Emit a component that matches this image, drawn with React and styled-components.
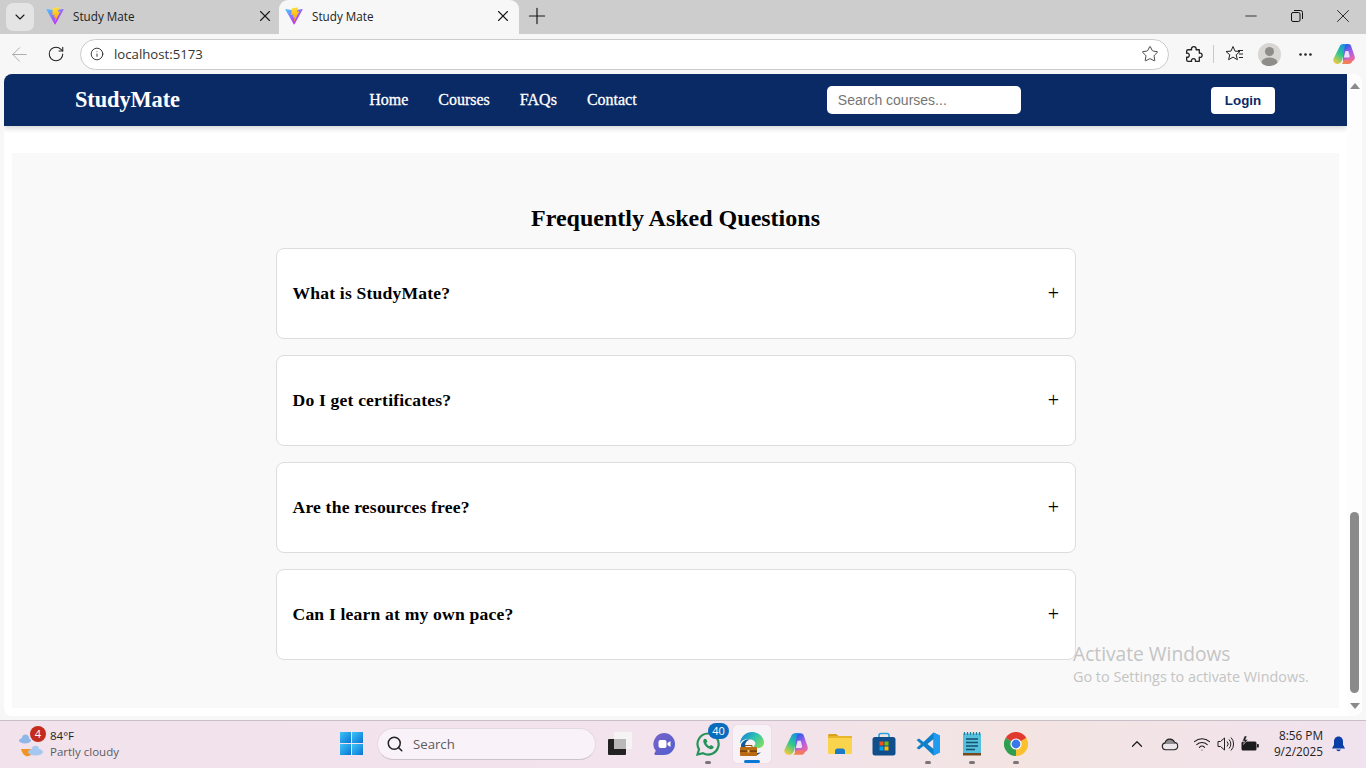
import styled, { createGlobalStyle } from 'styled-components';
import { ArrowLeft, ChevronDown, ChevronUp, Info, Minus, MoreHorizontal, Plus, RotateCw, Search, Star, Wifi, X } from 'lucide-react';

const GlobalStyle = createGlobalStyle`
  html, body {
    margin: 0;
    padding: 0;
    width: 1366px;
    height: 768px;
    overflow: hidden;
    background: #f7f7f7;
  }
  * { box-sizing: border-box; }
`;

const Desktop = styled.div`
  position: relative;
  width: 1366px;
  height: 768px;
  display: flex;
  flex-direction: column;
  font-family: 'Open Sans', 'Noto Sans', sans-serif;
`;

/* browser chrome */
const TabStrip = styled.div`
  height: 34px;
  background: #cdcdcd;
  display: flex;
  align-items: center;
  color: #1a1a1a;
`;
const TabMenu = styled.div`
  width: 28px;
  height: 28px;
  margin-left: 6px;
  margin-right: 2px;
  border-radius: 7px;
  background: #e4e4e4;
  display: flex;
  align-items: center;
  justify-content: center;
`;
const Tab = styled.div`
  width: 240px;
  height: 34px;
  margin-left: ${(p) => (p.$active ? '3px' : '0')};
  padding: 0 ${(p) => (p.$active ? '7px' : '2px')} 2px ${(p) => (p.$active ? '6px' : '10px')};
  display: flex;
  align-items: center;
  border-radius: 9px 9px 0 0;
  background: ${(p) => (p.$active ? '#f7f7f7' : 'transparent')};
`;
const TabTitle = styled.span`
  flex: 1;
  margin-left: 9px;
  font: 11.7px 'Open Sans', sans-serif;
  color: #222;
`;
const NewTab = styled.div`
  margin-left: 5px;
  padding-bottom: 2px;
  display: flex;
`;
const WindowButtons = styled.div`
  margin-left: auto;
  display: flex;
`;
const WindowButton = styled.div`
  width: 46px;
  height: 34px;
  padding-bottom: 2px;
  display: flex;
  align-items: center;
  justify-content: center;
`;

const Toolbar = styled.div`
  height: 40px;
  background: #f7f7f7;
  display: flex;
  align-items: center;
  color: #222;
`;
const ToolSlot = styled.div`
  width: ${(p) => p.$w || 36}px;
  display: flex;
  justify-content: center;
  align-items: center;
  flex: none;
`;
const AddressBar = styled.div`
  width: 1089px;
  height: 31px;
  margin: 0 6px 0 6px;
  border: 1px solid #cbcbcb;
  border-radius: 16px;
  background: #fff;
  display: flex;
  align-items: center;
  padding: 0 9px;
  flex: none;
`;
const Url = styled.span`
  margin-left: 10px;
  flex: 1;
  font: 13.2px 'Open Sans', sans-serif;
  color: #333;
`;
const ToolDivider = styled.div`
  width: 1px;
  height: 18px;
  margin-left: 2px;
  background: #c9c9c9;
`;
const Avatar = styled.div`
  width: 23px;
  height: 23px;
  border-radius: 50%;
  background: #d8d6d3;
  overflow: hidden;
`;

/* page */
const PageFrame = styled.div`
  height: 642px;
  margin: 0 4px;
  background: #fff;
  border-radius: 8px;
  display: flex;
  overflow: hidden;
`;
const Page = styled.div`
  flex: 1;
  display: flex;
  flex-direction: column;
`;
const Navbar = styled.nav`
  height: 52px;
  padding: 0 72px 0 71px;
  background: #0a2a66;
  box-shadow: 0 2px 6px rgba(0, 0, 0, 0.18);
  display: flex;
  align-items: center;
  justify-content: space-between;
`;
const Logo = styled.div`
  width: 105px;
  font: bold 22.4px 'Liberation Serif', serif;
  letter-spacing: -0.1px;
  white-space: nowrap;
  color: #fff;
`;
const NavLinks = styled.div`
  display: flex;
  gap: 30px;
  margin-left: -1px;
`;
const NavLink = styled.a`
  font: 500 16px 'Liberation Serif', serif;
  color: #fff;
  -webkit-text-stroke: 0.3px #fff;
`;
const SearchInput = styled.input`
  width: 194px;
  height: 28px;
  padding: 0 11px;
  border: none;
  border-radius: 5px;
  background: #fff;
  font: 14px 'Liberation Sans', sans-serif;
  &::placeholder { color: #757575; opacity: 1; }
`;
const LoginButton = styled.button`
  width: 64px;
  height: 27px;
  padding: 0;
  margin-top: 1px;
  border: none;
  border-radius: 4px;
  background: #fff;
  color: #0a2a66;
  font: bold 13.33px 'Liberation Sans', sans-serif;
`;
const FaqSection = styled.section`
  margin: 27px 8px 0;
  height: 555px;
  background: #f9f9f9;
  padding-top: 51px;
  display: flex;
  flex-direction: column;
  align-items: center;
`;
const FaqTitle = styled.h2`
  margin: 0 0 16px;
  font: bold 24px/28px 'Liberation Serif', serif;
  color: #000;
`;
const FaqList = styled.div`
  width: 800px;
  display: flex;
  flex-direction: column;
  gap: 16px;
`;
const FaqCard = styled.div`
  height: 91px;
  padding: 0 16px;
  background: #fff;
  border: 1px solid #ddd;
  border-radius: 8px;
  display: flex;
  align-items: center;
  justify-content: space-between;
`;
const Question = styled.h3`
  margin: 0;
  font: bold 17.6px 'Liberation Serif', serif;
  letter-spacing: 0.18px;
  color: #000;
`;
const Toggle = styled.span`
  font: 20px 'Liberation Serif', serif;
  color: #000;
  width: 12px;
  margin-right: -1px;
  text-align: center;
`;
const ScrollTrack = styled.div`
  width: 15px;
  padding: 0 3px;
  background: #fdfdfd;
  display: flex;
  flex-direction: column;
  align-items: center;
`;
const ScrollArrow = styled.div`
  width: 0;
  height: 0;
  margin-top: ${(p) => p.$mt}px;
  border-left: 5px solid transparent;
  border-right: 5px solid transparent;
  ${(p) => (p.$down ? 'border-top: 6px solid #8a8a8a;' : 'border-bottom: 6px solid #8a8a8a;')}
`;
const ScrollThumb = styled.div`
  width: 9px;
  height: 181px;
  margin-top: 423px;
  border-radius: 5px;
  background: #8a8a8a;
`;

const Watermark = styled.div`
  position: absolute;
  left: 1073px;
  top: 641px;
  color: #c4c4c4;
  pointer-events: none;
`;
const WatermarkTitle = styled.div`
  font-size: 19.2px;
  line-height: 26px;
`;
const WatermarkText = styled.div`
  font-size: 14.4px;
  line-height: 19px;
`;

/* taskbar */
const Taskbar = styled.div`
  height: 48px;
  margin-top: 4px;
  padding-bottom: 2px;
  border-top: 1px solid #c9bfc6;
  background: linear-gradient(90deg, #f1e2ec 0%, #f2e3ec 55%, #f3e4e2 75%, #f1e3ee 100%);
  display: flex;
  align-items: center;
`;
const Weather = styled.div`
  position: relative;
  width: 340px;
  height: 47px;
  padding-left: 18px;
  display: flex;
  align-items: center;
  flex: none;
`;
const WeatherBadge = styled.div`
  position: absolute;
  left: 30px;
  top: 6px;
  width: 16px;
  height: 16px;
  border-radius: 50%;
  background: #c42b1c;
  color: #fff;
  font-size: 11px;
  line-height: 16px;
  text-align: center;
`;
const WeatherText = styled.div`
  margin-left: 6px;
  font-size: 11.5px;
  line-height: 16px;
  color: #222;
`;
const WeatherSub = styled.div`
  color: #5c5c5c;
`;
const StartButton = styled.div`
  width: 37px;
  flex: none;
  display: flex;
`;
const SearchBox = styled.div`
  width: 219px;
  height: 32px;
  flex: none;
  margin-right: 2px;
  border: 1px solid #e4d9e1;
  border-bottom-color: #cfc4cc;
  border-radius: 16px;
  background: #f9f2f8;
  display: flex;
  align-items: center;
  padding-left: 8px;
  color: #222;
`;
const SearchLabel = styled.span`
  margin-left: 9px;
  font-size: 13.2px;
  color: #5c5c5c;
`;
const AppIcons = styled.div`
  display: flex;
  flex: none;
`;
const AppButton = styled.div`
  position: relative;
  width: ${(p) => (p.$active ? 38 : 44)}px;
  height: 38px;
  margin: ${(p) => (p.$active ? '0 3px' : '0')};
  display: flex;
  align-items: center;
  justify-content: center;
  border-radius: 4px;
  ${(p) => p.$active && 'background: #f8f1f5; box-shadow: 0 0 1px rgba(0,0,0,0.2);'}
`;
const AppDot = styled.div`
  position: absolute;
  bottom: ${(p) => (p.$active ? 0 : -1)}px;
  left: 50%;
  transform: translateX(-50%);
  width: ${(p) => (p.$active ? 16 : 6)}px;
  height: 3px;
  border-radius: 2px;
  background: ${(p) => (p.$active ? '#0a78d4' : '#7a7479')};
`;
const CountBadge = styled.div`
  position: absolute;
  top: -2px;
  left: 22px;
  min-width: 21px;
  height: 16px;
  padding: 0 3px;
  border-radius: 8px;
  background: #0a6cbd;
  color: #fff;
  font-size: 11px;
  line-height: 16px;
  text-align: center;
`;
const Tray = styled.div`
  margin-left: auto;
  display: flex;
  align-items: center;
  color: #1c1c1c;
`;
const TraySlot = styled.div`
  width: ${(p) => p.$w}px;
  display: flex;
  justify-content: center;
`;
const Clock = styled.div`
  width: 52px;
  margin-left: 7px;
  margin-top: -1px;
  text-align: right;
  font-size: 11.8px;
  line-height: 16px;
  white-space: nowrap;
  color: #222;
`;
const BellSlot = styled.div`
  width: 43px;
  padding-left: 8px;
  display: flex;
`;

function ViteIcon({ id }) {
  return (
    <svg width="18" height="18" viewBox="0 0 410 404">
      <defs>
        <linearGradient id={id + 'A'} x1="6" y1="33" x2="235" y2="344" gradientUnits="userSpaceOnUse">
          <stop stopColor="#41d1ff" />
          <stop offset="1" stopColor="#bd34fe" />
        </linearGradient>
        <linearGradient id={id + 'B'} x1="194" y1="8" x2="236" y2="292" gradientUnits="userSpaceOnUse">
          <stop stopColor="#ffea83" />
          <stop offset="0.08" stopColor="#ffdd35" />
          <stop offset="1" stopColor="#ffa800" />
        </linearGradient>
      </defs>
      <path d="M399.6 59.5 215.6 388.6c-3.8 6.8-13.6 6.8-17.5.1L10.5 59.6C6.3 52.2 12.6 43.3 21 44.8l184.2 32.9c1.2.2 2.4.2 3.6 0L389 44.9c8.3-1.5 14.7 7.3 10.6 14.6Z" fill={`url(#${id}A)`} />
      <path d="M292.9 1.6 156.9 28.2c-2.2.4-3.9 2.3-4 4.6l-8.4 141.5c-.2 3.3 2.9 5.9 6.1 5.2l37.9-8.7c3.5-.8 6.7 2.3 6 5.8l-11.3 55.2c-.8 3.7 2.8 6.9 6.4 5.8l23.4-7.1c3.6-1.1 7.1 2.1 6.4 5.8l-17.9 86.6c-1.1 5.4 6.1 8.4 9.1 3.7l2-3.1 110.9-221.4c1.9-3.7-1.3-7.9-5.4-7.1l-39 7.5c-3.7.7-6.8-2.7-5.8-6.3l25.5-88.2c1-3.6-2.1-7.1-5.9-6.3Z" fill={`url(#${id}B)`} />
    </svg>
  );
}

function RestoreIcon() {
  return (
    <svg width="12" height="12" viewBox="0 0 12 12" fill="none" stroke="#111" strokeWidth="1">
      <rect x="0.5" y="2.5" width="8.5" height="9" rx="1.5" />
      <path d="M3 .5h6.5a2 2 0 0 1 2 2V9" />
    </svg>
  );
}

function ExtensionIcon() {
  return (
    <svg width="19" height="19" viewBox="0 0 18 18" fill="none" stroke="#222" strokeWidth="1.25" strokeLinejoin="round">
      <path d="M4 4.500H7.200C6.600 2.800 7.900 1.500 9.300 1.500C10.700 1.500 12 2.800 11.400 4.500H14.500V7.800C16.200 7.200 17.200 8.300 17.200 9.700C17.200 11.100 16.200 12.200 14.500 11.600V15.500H10.800C11.300 13.800 10.300 12.900 9 12.900C7.700 12.900 6.700 13.800 7.200 15.500H4C3 15.500 2.500 15 2.500 14V11.500C4 12 5 11 5 9.700C5 8.400 4 7.400 2.500 7.900V6C2.500 5 3 4.500 4 4.500Z" />
    </svg>
  );
}

function FavoritesIcon() {
  return (
    <svg width="20" height="18" viewBox="0 0 20 18" fill="none" stroke="#222" strokeWidth="1" strokeLinejoin="round">
      <path d="M8 1.500l2 4.600 5 .4-3.800 3.300 1.200 4.900L8 12.100l-4.400 2.600 1.200-4.900L1 6.500l5-.4z" />
      <path d="M13 5.500h5M14 9h4M14 12.500h4" />
    </svg>
  );
}

function AvatarIcon() {
  return (
    <svg width="23" height="23" viewBox="0 0 23 23" fill="#8f8d8a">
      <circle cx="11.500" cy="8.500" r="4.500" />
      <ellipse cx="11.500" cy="19.500" rx="8" ry="5" />
    </svg>
  );
}

function CopilotIcon({ size = 24, id }) {
  return (
    <svg width={size} height={size} viewBox="0 0 24 24">
      <defs>
        <linearGradient id={id + 'L'} x1="0.7" y1="0" x2="0.2" y2="1">
          <stop stopColor="#1b8fe8" />
          <stop offset="0.5" stopColor="#2cc98e" />
          <stop offset="1" stopColor="#f6cb3a" />
        </linearGradient>
        <linearGradient id={id + 'R'} x1="0.3" y1="0" x2="0.8" y2="1">
          <stop stopColor="#1f5fe6" />
          <stop offset="0.5" stopColor="#a75ee8" />
          <stop offset="1" stopColor="#f26a9c" />
        </linearGradient>
        <linearGradient id={id + 'B'} x1="0" y1="1" x2="1" y2="0">
          <stop stopColor="#f08a3c" />
          <stop offset="1" stopColor="#f0609a" />
        </linearGradient>
      </defs>
      <path d="M11 2h5.200c1.400 0 2.600.8 3 2.200l3.500 10.300c.8 2.400-1 4.900-3.500 4.900H11z" fill={`url(#${id}R)`} />
      <path d="M7.500 4.800C8 3 9.500 2 11.300 2h4.900c-1.800 0-3 1-3.500 2.800L10.500 17c-.6 2.800-2.300 5-4.900 5C2.700 22 .6 19.500 1.400 17z" fill={`url(#${id}L)`} />
      <path d="M9.800 22h6.700c1.800 0 3.200-1 3.700-2.700l1.300-4c-.8 1.400-2 2.200-3.600 2.200h-4c-1.700 0-2.400 1.100-2.800 2.200-.3 1.100-1 2-1.300 2.300z" fill={`url(#${id}B)`} />
      <path d="M13.400 9h3l1.200 5c.2 1-.4 1.600-1.300 1.600h-4.500z" fill="#fff" opacity=".8" />
    </svg>
  );
}

function WeatherIcon() {
  return (
    <svg width="26" height="27" viewBox="0 0 26 27">
      <path d="M3 19h13c-1 5-4 8-8 7-2-.5-4-3-5-7z" fill="#f29423" />
      <ellipse cx="7" cy="10.500" rx="6" ry="3" fill="#8fb7e8" />
      <circle cx="7.500" cy="8" r="3.500" fill="#8fb7e8" />
      <ellipse cx="17.500" cy="22" rx="7.500" ry="3.500" fill="#a6c8f0" />
      <circle cx="17.500" cy="19.500" r="3.800" fill="#a6c8f0" />
    </svg>
  );
}

function WindowsLogo() {
  return (
    <svg width="23" height="23" viewBox="0 0 23 23">
      <defs>
        <linearGradient id="winTile" x1="0" y1="0" x2="1" y2="1">
          <stop stopColor="#3cc4f8" />
          <stop offset="1" stopColor="#0a74d4" />
        </linearGradient>
      </defs>
      <rect x="0" y="0" width="11" height="11" fill="url(#winTile)" />
      <rect x="12" y="0" width="11" height="11" fill="url(#winTile)" />
      <rect x="0" y="12" width="11" height="11" fill="url(#winTile)" />
      <rect x="12" y="12" width="11" height="11" fill="url(#winTile)" />
    </svg>
  );
}

function WidgetIcon() {
  return (
    <svg width="24" height="23" viewBox="0 0 24 23">
      <rect x="0" y="7" width="18" height="16" rx="1" fill="#222" />
      <rect x="6" y="0" width="18" height="17" rx="1" fill="#f5f3f4" />
      <rect x="6" y="7" width="12" height="10" fill="#b9b7b8" />
    </svg>
  );
}

function MeetIcon() {
  return (
    <svg width="24" height="24" viewBox="0 0 24 24">
      <defs>
        <linearGradient id="meetFill" x1="0" y1="0" x2="1" y2="1">
          <stop stopColor="#7a62c9" />
          <stop offset="1" stopColor="#4f5fcf" />
        </linearGradient>
      </defs>
      <path d="M12 1a11 11 0 0 1 0 22H3.500c-1 0-1.500-1-1-1.800l1.300-2.400A11 11 0 0 1 12 1z" fill="url(#meetFill)" />
      <rect x="6.500" y="8" width="8" height="8" rx="2" fill="#fff" />
      <path d="M15.500 11l3-2v6l-3-2z" fill="#fff" />
    </svg>
  );
}

function WhatsappIcon() {
  return (
    <svg width="26" height="26" viewBox="0 0 26 26" fill="none">
      <path d="M13 2.500a10.500 10.500 0 0 0-9 15.800L2.500 23.500l5.400-1.400A10.500 10.500 0 1 0 13 2.500z" stroke="#25935a" strokeWidth="2.200" />
      <path d="M9.500 7.800c-.9.600-1.600 2-1 3.700 1 3 3.500 5.500 6.400 6.500 1.700.5 3.100-.1 3.700-1.200l-.3-1.600-2.400-1.100-1.200 1.200c-1.500-.7-2.800-2-3.400-3.400l1.100-1.200-1-2.500z" fill="#25935a" />
    </svg>
  );
}

function EdgeIcon() {
  return (
    <svg width="26" height="26" viewBox="0 0 26 26">
      <defs>
        <linearGradient id="edgeTop" x1="0" y1="0.2" x2="1" y2="0.8">
          <stop stopColor="#1583d6" />
          <stop offset="0.5" stopColor="#2fc3b0" />
          <stop offset="1" stopColor="#85de5c" />
        </linearGradient>
      </defs>
      <path d="M1 12C2 5 7 1 13 1c7 0 12 5 12 11 0 3-3 5-6 5-2 0-4-.8-4.500-2 3-1 2.500-5.500-2.500-6.500-5-1-9.500 0-11 4z" fill="url(#edgeTop)" />
      <path d="M6 15c0-3 1.500-5.500 5-6.500C7 8 3 10 2 14c-.5 5 5 11 11 11 4 0 7-1.500 9-4-2 1-5 1.500-8 .5-4-1.500-8-2.500-8-6.500z" fill="#0c5a9e" />
      <rect x="1" y="16" width="17" height="9" rx="1" fill="#b96a12" />
      <rect x="1" y="19.500" width="17" height="1.200" fill="#5a3208" />
      <rect x="8.500" y="19" width="2" height="2.500" fill="#f4c36a" />
      <path d="M6 16v-1.500h7V16" fill="none" stroke="#8a4f0c" strokeWidth="1" />
    </svg>
  );
}

function FolderIcon() {
  return (
    <svg width="24" height="24" viewBox="0 0 24 24">
      <path d="M0 3.500C0 2.700.7 2 1.500 2h6.800l2.700 2.500H0z" fill="#d9a21b" />
      <rect x="0" y="4" width="24" height="18" rx="1.200" fill="#fbd44e" />
      <rect x="0" y="4" width="24" height="2" fill="#e8b62a" />
      <path d="M7 19c0-1.500 1-2.500 2.500-2.500h5c1.500 0 2.500 1 2.500 2.500v3H7z" fill="#1b7ac8" />
    </svg>
  );
}

function StoreIcon() {
  return (
    <svg width="24" height="24" viewBox="0 0 24 24">
      <path d="M7 6V3.500C7 2.500 7.800 1.500 9 1.500h6c1.200 0 2 1 2 2V6" fill="none" stroke="#27a2e0" strokeWidth="1.600" />
      <rect x="0.500" y="5" width="23" height="18.500" rx="2.500" fill="#104f8c" />
      <rect x="7.500" y="9.500" width="4" height="4" fill="#f25022" />
      <rect x="12.500" y="9.500" width="4" height="4" fill="#7fba00" />
      <rect x="7.500" y="14.500" width="4" height="4" fill="#00a4ef" />
      <rect x="12.500" y="14.500" width="4" height="4" fill="#ffb900" />
    </svg>
  );
}

function VsCodeIcon() {
  return (
    <svg width="24" height="24" viewBox="0 0 24 24">
      <path d="M17.500 0.500L23.800 3.500v17L17.500 23.500 7.500 14l-4.500 3.500-2.500-1.500L5 12 .5 8 3 6.500 7.500 10z" fill="#0f7fcc" />
      <path d="M17.500 7l-6 5 6 5z" fill="#f2e3ec" />
      <path d="M17.500 .5L23.800 3.500v17L17.500 23.500z" fill="#1f9cf0" />
    </svg>
  );
}

function NotepadIcon() {
  return (
    <svg width="20" height="24" viewBox="0 0 20 24">
      <rect x="1" y="1.500" width="18" height="21.500" fill="#56bfdd" />
      <rect x="1" y="21" width="18" height="2.500" fill="#7a4a1e" />
      <path d="M2.500 0v3M5.500 0v3M8.500 0v3M11.500 0v3M14.500 0v3M17.500 0v3" stroke="#1f7fa0" strokeWidth="1.200" />
      <path d="M4 7h12M4 10.500h12M4 14h12M4 17.500h9" stroke="#14506e" strokeWidth="1.400" />
    </svg>
  );
}

function ChromeIcon() {
  return (
    <svg width="24" height="24" viewBox="0 0 24 24">
      <path d="M12 12L1.600 6A12 12 0 0 1 22.400 6z" fill="#e0392d" />
      <path d="M12 12l10.400-6A12 12 0 0 1 12 24z" fill="#fbc02d" />
      <path d="M12 12v12A12 12 0 0 1 1.600 6z" fill="#2f9e4f" />
      <circle cx="12" cy="12" r="5.600" fill="#fff" />
      <circle cx="12" cy="12" r="4.400" fill="#3b78e7" />
    </svg>
  );
}

function CloudIcon() {
  return (
    <svg width="18" height="14" viewBox="0 0 18 14">
      <defs>
        <linearGradient id="trayCloud" x1="0" y1="0" x2="0" y2="1">
          <stop offset="0.5" stopColor="#8f8d90" />
          <stop offset="0.5" stopColor="#ece6ea" />
        </linearGradient>
      </defs>
      <path d="M4.500 12.800a3.500 3.500 0 0 1-.5-6.900 5 5 0 0 1 9.500-.6 3.800 3.800 0 0 1 0 7.500z" fill="url(#trayCloud)" stroke="#222" strokeWidth="1.100" />
    </svg>
  );
}

function SpeakerIcon() {
  return (
    <svg width="18" height="16" viewBox="0 0 18 16" fill="none" stroke="#222" strokeWidth="1">
      <path d="M1 5.500h2.500L7.500 2v12l-4-3.500H1z" strokeLinejoin="round" />
      <path d="M10 5.500a3.500 3.500 0 0 1 0 5M12 3.500a6.500 6.500 0 0 1 0 9M14 1.500a9.500 9.500 0 0 1 0 13" />
    </svg>
  );
}

function BatteryIcon() {
  return (
    <svg width="18" height="16" viewBox="0 0 18 16" fill="#1c1c1c">
      <path d="M2 5.500h12a1.500 1.500 0 0 1 1.500 1.500v6a1.500 1.500 0 0 1-1.500 1.500H2A1.500 1.500 0 0 1 .5 13V7A1.500 1.500 0 0 1 2 5.500z" />
      <rect x="16" y="8" width="1.800" height="3.500" rx=".6" />
      <path d="M3.500 0L1.500 5h2l-1 3.500L7 3.500H4.500L6 0z" stroke="#f3e4e8" strokeWidth=".5" />
    </svg>
  );
}

function BellIcon() {
  return (
    <svg width="15" height="16" viewBox="0 0 15 16" fill="#0b3fa8">
      <path d="M7.500 0.500C4.700.5 3 2.700 3 5.500v3.300L1 12.500h13l-2-3.700V5.500C12 2.700 10.300.5 7.500.5z" />
      <path d="M5.200 13.500a2.400 2.400 0 0 0 4.600 0z" />
    </svg>
  );
}

const questions = ['What is StudyMate?', 'Do I get certificates?', 'Are the resources free?', 'Can I learn at my own pace?'];

export default function App() {
  return (
    <>
      <GlobalStyle />
      <Desktop>
        <TabStrip>
          <TabMenu><ChevronDown size={16} strokeWidth={1.6} /></TabMenu>
          <Tab>
            <ViteIcon id="tabOne" />
            <TabTitle>Study Mate</TabTitle>
            <X size={18} strokeWidth={1.5} />
          </Tab>
          <Tab $active>
            <ViteIcon id="tabTwo" />
            <TabTitle>Study Mate</TabTitle>
            <X size={18} strokeWidth={1.5} />
          </Tab>
          <NewTab><Plus size={26} strokeWidth={1.1} /></NewTab>
          <WindowButtons>
            <WindowButton><Minus size={18} strokeWidth={1.1} /></WindowButton>
            <WindowButton><RestoreIcon /></WindowButton>
            <WindowButton><X size={22} strokeWidth={1} /></WindowButton>
          </WindowButtons>
        </TabStrip>
        <Toolbar>
          <ToolSlot $w={38}><ArrowLeft size={23} strokeWidth={1} color="#a9a9a9" /></ToolSlot>
          <ToolSlot $w={36}><RotateCw size={18} strokeWidth={1.4} /></ToolSlot>
          <AddressBar>
            <Info size={14} strokeWidth={1.5} />
            <Url>localhost:5173</Url>
            <Star size={18} strokeWidth={1.1} />
          </AddressBar>
          <ToolSlot $w={36}><ExtensionIcon /></ToolSlot>
          <ToolDivider />
          <ToolSlot $w={41}><FavoritesIcon /></ToolSlot>
          <ToolSlot $w={29}><Avatar><AvatarIcon /></Avatar></ToolSlot>
          <ToolSlot $w={43}><MoreHorizontal size={17} strokeWidth={1.8} /></ToolSlot>
          <ToolSlot $w={33}><CopilotIcon id="copilotTool" /></ToolSlot>
        </Toolbar>
        <PageFrame>
          <Page>
            <Navbar>
              <Logo>StudyMate</Logo>
              <NavLinks>
                <NavLink>Home</NavLink>
                <NavLink>Courses</NavLink>
                <NavLink>FAQs</NavLink>
                <NavLink>Contact</NavLink>
              </NavLinks>
              <SearchInput placeholder="Search courses..." />
              <LoginButton>Login</LoginButton>
            </Navbar>
            <FaqSection>
              <FaqTitle>Frequently Asked Questions</FaqTitle>
              <FaqList>
                {questions.map((q) => (
                  <FaqCard key={q}>
                    <Question>{q}</Question>
                    <Toggle>+</Toggle>
                  </FaqCard>
                ))}
              </FaqList>
            </FaqSection>
          </Page>
          <ScrollTrack>
            <ScrollArrow $mt={9} />
            <ScrollThumb />
            <ScrollArrow $down $mt={10} />
          </ScrollTrack>
        </PageFrame>
        <Taskbar>
          <Weather>
            <WeatherIcon />
            <WeatherBadge>4</WeatherBadge>
            <WeatherText>
              84°F
              <WeatherSub>Partly cloudy</WeatherSub>
            </WeatherText>
          </Weather>
          <StartButton><WindowsLogo /></StartButton>
          <SearchBox>
            <Search size={18} strokeWidth={2} />
            <SearchLabel>Search</SearchLabel>
          </SearchBox>
          <AppIcons>
            <AppButton><WidgetIcon /></AppButton>
            <AppButton><MeetIcon /></AppButton>
            <AppButton>
              <WhatsappIcon />
              <CountBadge>40</CountBadge>
              <AppDot />
            </AppButton>
            <AppButton $active>
              <EdgeIcon />
              <AppDot $active />
            </AppButton>
            <AppButton><CopilotIcon size={26} id="copilotBar" /></AppButton>
            <AppButton><FolderIcon /></AppButton>
            <AppButton><StoreIcon /></AppButton>
            <AppButton><VsCodeIcon /><AppDot /></AppButton>
            <AppButton><NotepadIcon /><AppDot /></AppButton>
            <AppButton><ChromeIcon /><AppDot /></AppButton>
          </AppIcons>
          <Tray>
            <TraySlot $w={30}><ChevronUp size={18} strokeWidth={1.6} /></TraySlot>
            <TraySlot $w={36}><CloudIcon /></TraySlot>
            <TraySlot $w={28}><Wifi size={18} strokeWidth={1.4} /></TraySlot>
            <TraySlot $w={20}><SpeakerIcon /></TraySlot>
            <TraySlot $w={28}><BatteryIcon /></TraySlot>
            <Clock>
              8:56 PM
              <div>9/2/2025</div>
            </Clock>
            <BellSlot><BellIcon /></BellSlot>
          </Tray>
        </Taskbar>
        <Watermark>
          <WatermarkTitle>Activate Windows</WatermarkTitle>
          <WatermarkText>Go to Settings to activate Windows.</WatermarkText>
        </Watermark>
      </Desktop>
    </>
  );
}
